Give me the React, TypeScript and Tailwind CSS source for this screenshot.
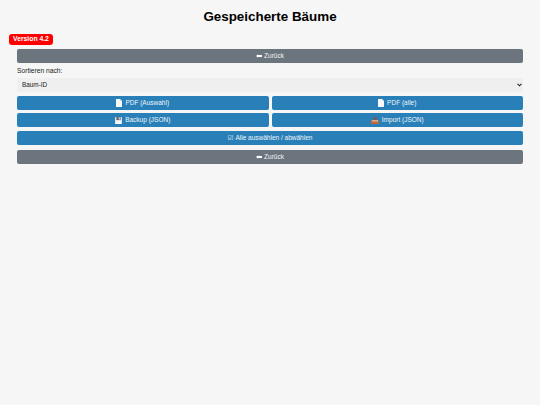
const btn =
  'flex h-[14px] items-center justify-center gap-[2px] rounded-[2px] text-[6.5px] leading-none text-[#f0f4f8]';

function BackArrow() {
  return (
    <svg width="6" height="4" viewBox="0 0 6 4" className="shrink-0">
      <path d="M0 2 L2.2 0.2 V1.1 H6 V2.9 H2.2 V3.8 Z" fill="#fff" />
    </svg>
  );
}

function PageIcon() {
  return (
    <svg width="6" height="8" viewBox="0 0 6 8" className="mr-[1px] shrink-0">
      <path d="M0 0 H4 L6 2 V8 H0 Z" fill="#f7f9fb" />
      <path d="M4 0 L6 2 H4 Z" fill="#c9d6e2" />
    </svg>
  );
}

function SaveIcon() {
  return (
    <svg width="7" height="7" viewBox="0 0 7 7" className="mr-[1px] shrink-0">
      <rect width="7" height="7" rx="0.6" fill="#dfe4ea" />
      <rect x="1.4" width="4.2" height="3" fill="#5a6470" />
      <rect x="3.6" y="0.5" width="1.2" height="2" fill="#e8ecf0" />
      <rect x="1" y="4" width="5" height="3" fill="#f4f6f8" />
    </svg>
  );
}

function InboxIcon() {
  return (
    <svg width="8" height="7" viewBox="0 0 8 7" className="mr-[1px] shrink-0">
      <path d="M2.6 0 H5.4 V1.6 H6.6 L4 3.8 L1.4 1.6 H2.6 Z" fill="#7d5a52" />
      <path d="M1 3 H7 L8 4 V7 H0 V4 Z" fill="#c2673a" />
      <rect x="1" y="3.4" width="6" height="0.9" fill="#ecd9c8" />
    </svg>
  );
}

export default function App() {
  return (
    <div className="relative min-h-[405px] bg-[#f6f6f6] font-['Liberation_Sans',Arial,sans-serif] text-black">
      <span className="absolute left-[9px] top-[34px] flex h-[11px] items-center rounded-[3px] bg-[#f00] px-[4px] text-[6.8px] font-bold leading-none text-white">
        Version 4.2
      </span>

      <h1 className="pt-[8px] text-center text-[13.4px] font-bold leading-[17px]">Gespeicherte Bäume</h1>

      <div className="flex flex-col px-[17px] pt-[24px]">
        <button className={`${btn} bg-[#6c757d]`}>
          <BackArrow /> Zurück
        </button>

        <label className="mt-[2px] h-[11px] text-[6.7px] leading-[11px] text-[#1a1a1a]">Sortieren nach:</label>

        <div className="mt-[2px] flex h-[14px] items-center justify-between rounded-[2px] bg-[#efefef] pl-[5px] pr-[1px] text-[6.4px] leading-none text-[#222]">
          <span>Baum-ID</span>
          <svg width="5" height="4" viewBox="0 0 5 4">
            <path d="M0.6 0.8 L2.5 2.8 L4.4 0.8" fill="none" stroke="#222" strokeWidth="1.1" />
          </svg>
        </div>

        <div className="mt-[4px] grid grid-cols-2 gap-x-[3px] gap-y-[3px]">
          <button className={`${btn} bg-[#2980b9]`}>
            <PageIcon /> PDF (Auswahl)
          </button>
          <button className={`${btn} bg-[#2980b9]`}>
            <PageIcon /> PDF (alle)
          </button>
          <button className={`${btn} bg-[#2980b9]`}>
            <SaveIcon /> Backup (JSON)
          </button>
          <button className={`${btn} bg-[#2980b9]`}>
            <InboxIcon /> Import (JSON)
          </button>
        </div>

        <button className={`${btn} mt-[4px] bg-[#2980b9]`}>
          <span className="font-['DejaVu_Sans',sans-serif]">☑</span> Alle auswählen / abwählen
        </button>

        <button className={`${btn} mt-[5px] bg-[#6c757d]`}>
          <BackArrow /> Zurück
        </button>
      </div>
    </div>
  );
}
